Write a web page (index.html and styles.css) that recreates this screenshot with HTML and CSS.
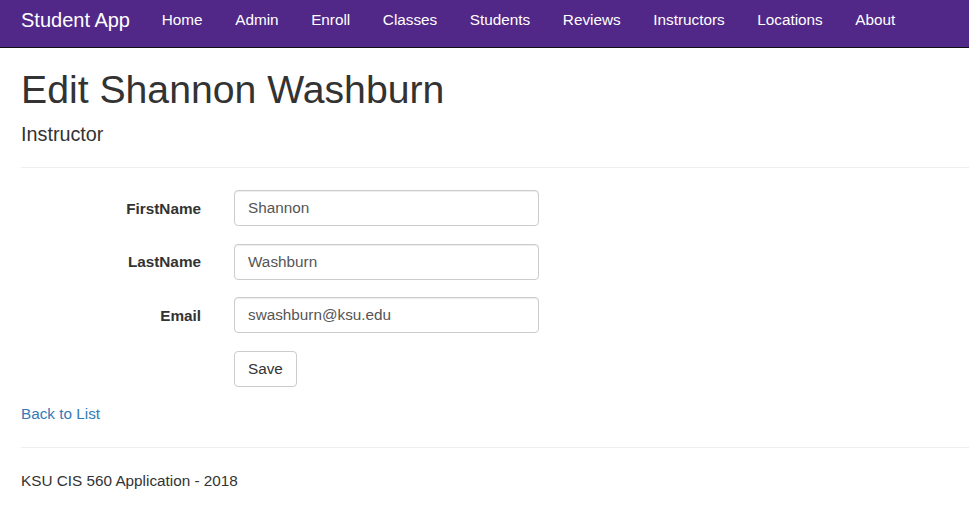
FILE: index.html
```html
<!DOCTYPE html>
<html lang="en">
<head>
<meta charset="utf-8">
<title>Edit Shannon Washburn</title>
<link rel="stylesheet" href="styles.css">
</head>
<body>
<nav class="navbar">
  <a class="brand" href="#">Student App</a>
  <ul class="nav">
    <li><a href="#">Home</a></li>
    <li><a href="#">Admin</a></li>
    <li><a href="#">Enroll</a></li>
    <li><a href="#">Classes</a></li>
    <li><a href="#">Students</a></li>
    <li><a href="#">Reviews</a></li>
    <li><a href="#">Instructors</a></li>
    <li><a href="#">Locations</a></li>
    <li><a href="#">About</a></li>
  </ul>
</nav>
<main class="content">
  <h2 class="title">Edit Shannon Washburn</h2>
  <h4 class="subtitle">Instructor</h4>
  <hr class="rule rule-top">
  <form class="form">
    <div class="row">
      <label class="label" for="first">FirstName</label>
      <input class="input" id="first" type="text" value="Shannon">
    </div>
    <div class="row">
      <label class="label" for="last">LastName</label>
      <input class="input" id="last" type="text" value="Washburn">
    </div>
    <div class="row">
      <label class="label" for="email">Email</label>
      <input class="input" id="email" type="text" value="swashburn@ksu.edu">
    </div>
    <div class="row">
      <span class="label"></span>
      <button class="btn" type="button">Save</button>
    </div>
  </form>
  <div class="back"><a href="#">Back to List</a></div>
  <hr class="rule rule-bottom">
  <footer class="footer">KSU CIS 560 Application - 2018</footer>
</main>
</body>
</html>
```
FILE: styles.css
```css
html, body {
  margin: 0;
  padding: 0;
  background: #fff;
}
body {
  font-family: "Liberation Sans", Arial, sans-serif;
  font-size: 15.3px;
  line-height: 1.4;
  color: #333;
}
a {
  text-decoration: none;
}
.navbar {
  display: flex;
  align-items: flex-start;
  height: 47px;
  background: #512888;
  border-bottom: 1px solid #111;
  padding-left: 21px;
}
.brand {
  font-size: 20px;
  line-height: 40px;
  color: #fff;
  margin-right: 15.5px;
}
.nav {
  display: flex;
  list-style: none;
  margin: 0;
  padding: 0;
}
.nav a {
  display: block;
  padding: 0 16.3px;
  line-height: 40px;
  font-size: 15.3px;
  color: #fff;
}
.content {
  padding: 0 0 0 21px;
}
.title {
  margin: 20px 0 0;
  font-size: 39.2px;
  font-weight: 500;
  line-height: 1.1;
}
.subtitle {
  margin: 12.5px 0 0;
  font-size: 19.8px;
  font-weight: 500;
  line-height: 1.1;
}
.rule {
  border: 0;
  border-top: 1px solid #eee;
  margin: 0;
}
.rule-top {
  margin-top: 22px;
}
.form {
  margin-top: 22px;
  display: flex;
  flex-direction: column;
  gap: 17.5px;
}
.row {
  display: flex;
  align-items: center;
}
.label {
  width: 180px;
  margin-right: 33px;
  text-align: right;
  font-weight: bold;
  font-size: 15.3px;
}
.input {
  box-sizing: border-box;
  width: 305px;
  height: 36px;
  padding: 0 13px;
  border: 1px solid #ccc;
  border-radius: 4px;
  box-shadow: inset 0 1px 1px rgba(0,0,0,.075);
  font-family: "Liberation Sans", Arial, sans-serif;
  font-size: 15.3px;
  color: #555;
  background: #fff;
}
.btn {
  box-sizing: border-box;
  height: 36px;
  padding: 0 13px;
  border: 1px solid #ccc;
  border-radius: 4px;
  background: #fff;
  font-family: "Liberation Sans", Arial, sans-serif;
  font-size: 15.3px;
  color: #333;
}
.back {
  margin-top: 16.5px;
}
.back a {
  color: #337ab7;
}
.rule-bottom {
  margin-top: 22.5px;
}
.footer {
  margin-top: 22px;
}
```
